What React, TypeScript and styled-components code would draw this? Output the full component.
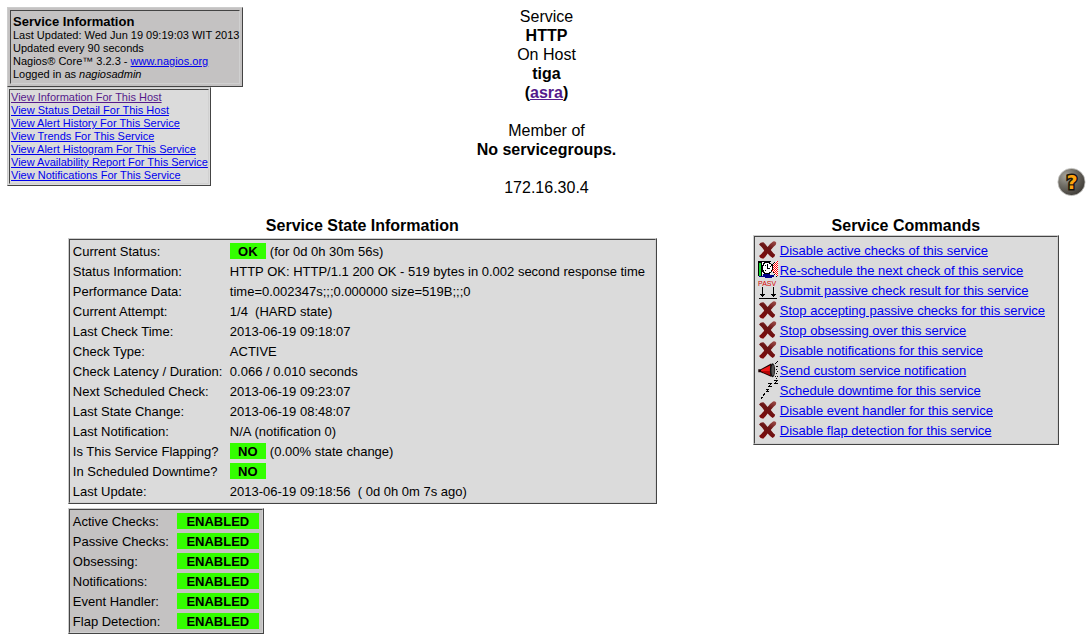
import React from "react";
import styled, { createGlobalStyle, css } from "styled-components";

const GlobalStyle = createGlobalStyle`
  body {
    margin: 0;
    background: #fff;
    color: #000;
    font-family: "Liberation Sans", Arial, sans-serif;
    font-size: 16px;
    line-height: 19px;
  }
`;

const Page = styled.div`
  padding: 7px 6px 6px 7px;
`;

const Header = styled.header`
  display: grid;
  grid-template-columns: 1fr auto 1fr;
`;

const HeaderLeft = styled.div`
  display: flex;
  flex-direction: column;
  align-items: flex-start;
`;

const HeaderCenter = styled.div`
  text-align: center;
`;

const HeaderRight = styled.div`
  display: flex;
  align-items: flex-end;
  justify-content: flex-end;
`;

const HeadLine = styled.p<{ $bold?: boolean; $spaced?: boolean }>`
  margin: 0;
  font-weight: ${(p) => (p.$bold ? 700 : 400)};
  ${(p) => p.$spaced && css`margin-top: 19px;`}
`;

const Link = styled.a<{ $visited?: boolean }>`
  color: ${(p) => (p.$visited ? "#551a8b" : "#0000ee")};
  text-decoration: underline;
`;

type Tone = "dark" | "light";

const Frame = styled.div<{ $tone: Tone; $gap: number }>`
  padding: ${(p) => p.$gap}px;
  background: ${(p) => (p.$tone === "dark" ? "#c4c2c2" : "#dbdbdb")};
  border: 1px solid;
  border-color: #cccccc #444444 #444444 #cccccc;
`;

const FrameBody = styled.div<{ $pad: string }>`
  padding: ${(p) => p.$pad};
  border: 1px solid;
  border-color: #444444 #d0d0d0 #d0d0d0 #444444;
`;

const InfoText = styled.p`
  margin: 0;
  font-size: 11px;
  line-height: 13px;
  white-space: nowrap;
`;

const InfoTitle = styled.h1`
  margin: 0;
  padding-top: 1px;
  font-size: 13px;
  line-height: 15px;
`;

const LinkList = styled.ul`
  margin: 0;
  padding: 0;
  list-style: none;
  font-size: 11px;
  line-height: 13px;
  white-space: nowrap;
`;

const HelpButton = styled.button`
  display: block;
  width: 30px;
  height: 30px;
  padding: 0;
  border: 0;
  background: none;
  cursor: pointer;
`;

const Content = styled.main`
  display: grid;
  grid-template-columns: 71fr 36fr;
  gap: 8px;
  margin-top: 19px;
`;

const Section = styled.section`
  display: flex;
  flex-direction: column;
  align-items: center;
`;

const SectionTitle = styled.h2`
  margin: 0;
  font-size: 16px;
  line-height: 19px;
`;

const PanelStack = styled.div`
  display: flex;
  flex-direction: column;
  align-items: flex-start;
  gap: 4px;
  margin-top: 3px;
`;

const DataTable = styled.table<{ $labelWidth: number; $valueWidth: number }>`
  border-collapse: collapse;
  font-size: 13px;
  line-height: 15px;
  white-space: pre;

  th {
    min-width: ${(p) => p.$labelWidth}px;
  }

  td {
    min-width: ${(p) => p.$valueWidth}px;
  }
`;

const Label = styled.th`
  padding: 3px 0 2px;
  font-weight: 400;
  text-align: left;
  vertical-align: baseline;
`;

const Value = styled.td`
  padding: 3px 0 2px;
  vertical-align: baseline;
`;

const Badge = styled.span<{ $width: number }>`
  display: inline-block;
  box-sizing: border-box;
  min-width: ${(p) => p.$width}px;
  margin-top: -1px;
  padding-top: 1px;
  background: #33ff00;
  font-weight: 700;
  text-align: center;
`;

const Note = styled.span`
  padding-left: 4px;
`;

const CommandList = styled.ul`
  min-width: 294px;
  margin: 0;
  padding: 0;
  list-style: none;
  font-size: 13px;
  white-space: nowrap;
`;

const Command = styled.li`
  display: flex;
  align-items: center;
  gap: 2px;
  height: 20px;
`;

const Icon = styled.svg`
  display: block;
  flex: none;
`;

function CrossIcon() {
  return (
    <Icon width="20" height="20" viewBox="0 0 20 20" aria-hidden="true">
      <defs>
        <linearGradient id="cross" x1=".8" y1="0" x2=".3" y2="1">
          <stop offset="0" stopColor="#984744" />
          <stop offset=".4" stopColor="#6a1515" />
          <stop offset="1" stopColor="#7d0b0b" />
        </linearGradient>
      </defs>
      <path
        d="M1 4.5Q2.5 2 5.5 2.3Q7.8 4.4 9.6 7Q12 3.5 15 1.5Q17 1 18.2 2.4Q18.4 4 17.6 5Q15 7 12.8 10Q14.8 12.8 17.2 14.8Q16.8 17 14.6 18Q12 16.4 9.6 13.6Q8 16.5 5.2 18.7Q2.2 18.7 1 16Q4 13.5 6.2 10.4Q4 7 1 4.5Z"
        fill="url(#cross)"
        stroke="#ebe4e4"
        strokeWidth="1"
        strokeLinejoin="round"
        paintOrder="stroke"
      />
    </Icon>
  );
}

function ClockIcon() {
  return (
    <Icon width="20" height="20" viewBox="0 0 20 20" shapeRendering="crispEdges" aria-hidden="true">
      <defs>
        <pattern id="check" width="2" height="2" patternUnits="userSpaceOnUse">
          <rect width="2" height="2" fill="#fff" />
          <rect width="1" height="1" fill="#f00" />
          <rect x="1" y="1" width="1" height="1" fill="#f00" />
        </pattern>
      </defs>
      <path d="M0 1H13V2H4V16H0Z" fill="#000" />
      <path d="M1 3H3V16H1Z" fill="#12d52a" />
      <path d="M1 16H5V14H7V13H12V15H16V17H14V18H7V17H1Z" fill="#00008b" />
      <path d="M4 2H13V14H4Z" fill="#fff" />
      <path d="M20 1V16H18L13 11V6L18 1Z" fill="url(#check)" />
      <path
        d="M6 2h6v1h1v1h1v1h1v5h-1v2h-1v1h-1v1H6v-1H5v-1H4V5h1V3h1z"
        fill="#000"
      />
      <path d="M7 3h4v1h2v2h1v4h-1v2h-2v1H7v-1H6v-2H5V6h1V4h1z" fill="#fff" />
      <path d="M9 4h1v4h2v1H9zM7 5h1v1H7zM7 10h1v1H7zM12 6h1v1h-1z" fill="#000" />
      <path d="M14 4h1v1h-1zM15 3h1v1h-1zM16 2h1v1h-1zM15 12h1v1h-1zM16 14h1v1h-1zM18 16h1v1h-1z" fill="#000" />
    </Icon>
  );
}

function PassiveIcon() {
  return (
    <Icon width="20" height="20" viewBox="0 0 20 20" shapeRendering="crispEdges" aria-hidden="true">
      <text x="0" y="6" fill="#d40000" fontSize="7" fontFamily="Liberation Sans, sans-serif">
        PASV
      </text>
      <path d="M4 7h1v10H4zM15 7h1v10h-1zM1 18h18v1H1zM2 14h5v1H2zM3 15h3v1H3zM13 14h5v1h-5zM14 15h3v1h-3z" fill="#000" />
    </Icon>
  );
}

function HornIcon() {
  return (
    <Icon width="20" height="20" viewBox="0 0 20 20" aria-hidden="true">
      <path d="M.3 9.3H2.5L13 3.6V16.8L2.5 12.2H.3Z" fill="#1a0000" />
      <path d="M3 10 12.5 5.2V11H3Z" fill="#f01818" />
      <path d="M3 11H12.5V15.4L4 11.9Z" fill="#b40505" />
      <ellipse cx="14.5" cy="10.2" rx="2.6" ry="7" fill="#111" />
      <ellipse cx="14.9" cy="10.2" rx="1.5" ry="5.7" fill="#555" />
      <path
        d="M17 3h1v1h-1zM18 2h1v1h-1zM19 1h1v1h-1zM18 6h2v1h-2zM18 9h1v1h-1zM19 11h1v1h-1zM18 13h1v1h-1zM17 16h1v1h-1zM19 16h1v1h-1zM18 18h1v1h-1z"
        fill="#000"
        shapeRendering="crispEdges"
      />
    </Icon>
  );
}

function SleepIcon() {
  return (
    <Icon width="20" height="20" viewBox="0 0 20 20" shapeRendering="crispEdges" aria-hidden="true">
      <path
        d="M16 0h4v1h-1v1h-1v1h2v1h-4v-1h1v-1h1v-1h-2zM10 3h4v1h-1v1h-1v1h2v1h-4v-1h1v-1h1v-1h-2zM8 9h3v1h-1v1h1v1h-3v-1h1v-1h-1zM5 14h2v1h-2zM6 13h1v1h-1zM5 15h1v1h-1zM3 17h2v1h-2zM3 18h1v1h-1z"
        fill="#000"
      />
    </Icon>
  );
}

function HelpIcon() {
  return (
    <Icon width="30" height="30" viewBox="0 0 30 30" aria-hidden="true">
      <defs>
        <radialGradient id="ball" cx=".3" cy=".28" r=".8">
          <stop offset="0" stopColor="#a5a39c" />
          <stop offset=".45" stopColor="#716e66" />
          <stop offset="1" stopColor="#3c3935" />
        </radialGradient>
      </defs>
      <circle cx="15.5" cy="15" r="13.6" fill="url(#ball)" stroke="#c9c9c6" strokeWidth=".8" />
      <text
        x="16"
        y="22"
        textAnchor="middle"
        fontFamily="DejaVu Sans, sans-serif"
        fontSize="19"
        fontWeight="700"
        fill="#ffa50f"
        stroke="#17120a"
        strokeWidth="3"
        paintOrder="stroke"
      >
        ?
      </text>
    </Icon>
  );
}

const viewLinks = [
  "View Information For This Host",
  "View Status Detail For This Host",
  "View Alert History For This Service",
  "View Trends For This Service",
  "View Alert Histogram For This Service",
  "View Availability Report For This Service",
  "View Notifications For This Service",
];

const stateRows: { label: string; badge?: string; text?: string }[] = [
  { label: "Current Status:", badge: "OK", text: "(for 0d 0h 30m 56s)" },
  { label: "Status Information:", text: "HTTP OK: HTTP/1.1 200 OK - 519 bytes in 0.002 second response time" },
  { label: "Performance Data:", text: "time=0.002347s;;;0.000000 size=519B;;;0" },
  { label: "Current Attempt:", text: "1/4  (HARD state)" },
  { label: "Last Check Time:", text: "2013-06-19 09:18:07" },
  { label: "Check Type:", text: "ACTIVE" },
  { label: "Check Latency / Duration:", text: "0.066 / 0.010 seconds" },
  { label: "Next Scheduled Check:", text: "2013-06-19 09:23:07" },
  { label: "Last State Change:", text: "2013-06-19 08:48:07" },
  { label: "Last Notification:", text: "N/A (notification 0)" },
  { label: "Is This Service Flapping?", badge: "NO", text: "(0.00% state change)" },
  { label: "In Scheduled Downtime?", badge: "NO" },
  { label: "Last Update:", text: "2013-06-19 09:18:56  ( 0d 0h 0m 7s ago)" },
];

const featureRows = [
  "Active Checks:",
  "Passive Checks:",
  "Obsessing:",
  "Notifications:",
  "Event Handler:",
  "Flap Detection:",
];

const commands = [
  { icon: CrossIcon, text: "Disable active checks of this service" },
  { icon: ClockIcon, text: "Re-schedule the next check of this service" },
  { icon: PassiveIcon, text: "Submit passive check result for this service" },
  { icon: CrossIcon, text: "Stop accepting passive checks for this service" },
  { icon: CrossIcon, text: "Stop obsessing over this service" },
  { icon: CrossIcon, text: "Disable notifications for this service" },
  { icon: HornIcon, text: "Send custom service notification" },
  { icon: SleepIcon, text: "Schedule downtime for this service" },
  { icon: CrossIcon, text: "Disable event handler for this service" },
  { icon: CrossIcon, text: "Disable flap detection for this service" },
];

export default function App() {
  return (
    <Page>
      <GlobalStyle />
      <Header>
        <HeaderLeft>
          <Frame $tone="dark" $gap={2}>
            <FrameBody $pad="2px 0 2px 2px">
              <InfoTitle>Service Information</InfoTitle>
              <InfoText>Last Updated: Wed Jun 19 09:19:03 WIT 2013</InfoText>
              <InfoText>Updated every 90 seconds</InfoText>
              <InfoText>
                Nagios® Core™ 3.2.3 - <Link href="#nagios">www.nagios.org</Link>
              </InfoText>
              <InfoText>
                Logged in as <i>nagiosadmin</i>
              </InfoText>
            </FrameBody>
          </Frame>
          <Frame $tone="light" $gap={1}>
            <FrameBody $pad="1px 0 1px 1px">
              <LinkList>
                {viewLinks.map((text, i) => (
                  <li key={text}>
                    <Link href="#view" $visited={i === 0}>
                      {text}
                    </Link>
                  </li>
                ))}
              </LinkList>
            </FrameBody>
          </Frame>
        </HeaderLeft>
        <HeaderCenter>
          <HeadLine>Service</HeadLine>
          <HeadLine $bold>HTTP</HeadLine>
          <HeadLine>On Host</HeadLine>
          <HeadLine $bold>tiga</HeadLine>
          <HeadLine $bold>
            (
            <Link href="#host" $visited>
              asra
            </Link>
            )
          </HeadLine>
          <HeadLine $spaced>Member of</HeadLine>
          <HeadLine $bold>No servicegroups.</HeadLine>
          <HeadLine $spaced>172.16.30.4</HeadLine>
        </HeaderCenter>
        <HeaderRight>
          <HelpButton type="button" aria-label="Help">
            <HelpIcon />
          </HelpButton>
        </HeaderRight>
      </Header>

      <Content>
        <Section>
          <SectionTitle>Service State Information</SectionTitle>
          <PanelStack>
            <Frame $tone="light" $gap={0}>
              <FrameBody $pad="1px 3px">
                <DataTable $labelWidth={157} $valueWidth={422}>
                  <tbody>
                    {stateRows.map((row) => (
                      <tr key={row.label}>
                        <Label scope="row">{row.label}</Label>
                        <Value>
                          {row.badge && <Badge $width={36}>{row.badge}</Badge>}
                          {row.badge ? row.text && <Note>{row.text}</Note> : row.text}
                        </Value>
                      </tr>
                    ))}
                  </tbody>
                </DataTable>
              </FrameBody>
            </Frame>
            <Frame $tone="dark" $gap={0}>
              <FrameBody $pad="1px 3px">
                <DataTable $labelWidth={104} $valueWidth={82}>
                  <tbody>
                    {featureRows.map((label) => (
                      <tr key={label}>
                        <Label scope="row">{label}</Label>
                        <Value>
                          <Badge $width={82}>ENABLED</Badge>
                        </Value>
                      </tr>
                    ))}
                  </tbody>
                </DataTable>
              </FrameBody>
            </Frame>
          </PanelStack>
        </Section>
        <Section>
          <SectionTitle>Service Commands</SectionTitle>
          <Frame $tone="light" $gap={0}>
            <FrameBody $pad="3px 5px 3px 3px">
              <CommandList>
                {commands.map(({ icon: CommandIcon, text }) => (
                  <Command key={text}>
                    <CommandIcon />
                    <Link href="#command">{text}</Link>
                  </Command>
                ))}
              </CommandList>
            </FrameBody>
          </Frame>
        </Section>
      </Content>
    </Page>
  );
}
